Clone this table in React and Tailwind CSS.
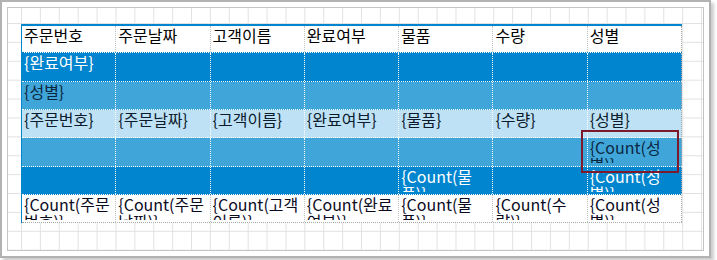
import React from "react";

const headers = ["주문번호", "주문날짜", "고객이름", "완료여부", "물품", "수량", "성별"];
const empty = ["", "", "", "", "", "", ""];

const rows = [
  {
    h: "h-[27.33px]",
    bg: "bg-white",
    text: "text-black",
    sep: "border-[#c2c2c2]",
    bottom: "border-b border-dotted border-[#0085ce]",
    cells: headers,
  },
  {
    h: "h-[28.33px]",
    bg: "bg-[#0085ce]",
    text: "text-white",
    sep: "border-white",
    bottom: "border-b border-dotted border-white",
    cells: ["{완료여부}", "", "", "", "", "", ""],
  },
  {
    h: "h-[28.33px]",
    bg: "bg-[#40a6da]",
    text: "text-[#0b2740]",
    sep: "border-white",
    bottom: "border-b border-dotted border-white",
    cells: ["{성별}", "", "", "", "", "", ""],
  },
  {
    h: "h-[28.33px]",
    bg: "bg-[#bee1f5]",
    text: "text-[#0b1b2c]",
    sep: "border-white",
    bottom: "border-b border-dotted border-white",
    cells: headers.map((t) => `{${t}}`),
  },
  {
    h: "h-[28.33px]",
    bg: "bg-[#40a6da]",
    text: "text-[#0b2740]",
    sep: "border-white",
    bottom: "border-b border-dotted border-white",
    cells: ["", "", "", "", "", "", "{Count(성별)}"],
  },
  {
    h: "h-[28.33px]",
    bg: "bg-[#0085ce]",
    text: "text-white",
    sep: "border-white",
    bottom: "border-b border-dotted border-white",
    cells: ["", "", "", "", "{Count(물품)}", "", "{Count(성별)}"],
  },
  {
    h: "h-[28.33px]",
    bg: "bg-white",
    text: "text-[#0a0a1e]",
    sep: "border-[#c2c2c2]",
    bottom: "border-b border-dotted border-[#a8a8a8]",
    cells: headers.map((t) => `{Count(${t})}`),
  },
];

function Row({ row }) {
  return (
    <div className={`grid grid-cols-7 ${row.h} ${row.bg} ${row.text} ${row.bottom}`}>
      {row.cells.map((c, i) => (
        <div
          key={i}
          className={`min-w-0 border-r border-dotted px-[2px] pt-[1px] ${i < 6 ? row.sep : "border-[#a8a8a8]"}`}
        >
          <div className="h-[24px] overflow-hidden text-[16px] leading-[17px]">{c}</div>
        </div>
      ))}
    </div>
  );
}

export default function App() {
  return (
    <div className="w-[717px] h-[260px] overflow-hidden bg-white font-['Noto_Sans_CJK_KR',sans-serif]">
      <div className="w-[711px] h-[258px] border-2 border-[#b2b2b2] bg-white p-[5px] shadow-[3px_3px_3px_rgba(0,0,0,0.2)]">
        <div className="h-full border border-[#c4c4c4] bg-white bg-[linear-gradient(to_right,#e2e2e2_1px,transparent_1px),linear-gradient(to_bottom,#e2e2e2_1px,transparent_1px)] bg-[size:18.9px_18.9px] bg-[position:13px_15px] pl-[13px] pt-[16px]">
          <div className="relative w-[661px] border-t-2 border-l border-[#0085ce]">
            {rows.map((r, i) => (
              <Row key={i} row={r} />
            ))}
            <div className="absolute left-[559px] top-[104px] h-[43px] w-[98px] border-2 border-[#7d1a2c]" />
          </div>
        </div>
      </div>
    </div>
  );
}
